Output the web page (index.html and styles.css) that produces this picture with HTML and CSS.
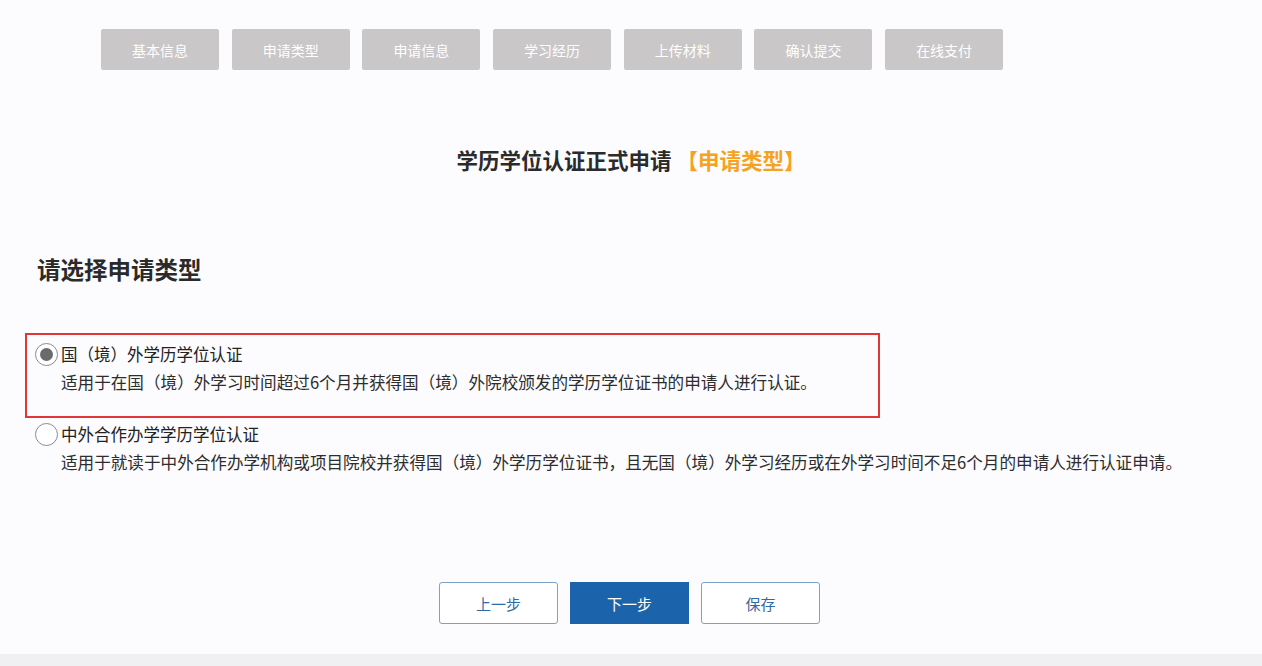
FILE: index.html
```html
<!DOCTYPE html>
<html lang="zh-CN">
<head>
<meta charset="utf-8">
<title>学历学位认证正式申请</title>
<link rel="stylesheet" href="styles.css">
</head>
<body>
<div class="page">
  <nav class="steps">
    <div class="step">基本信息</div>
    <div class="step">申请类型</div>
    <div class="step">申请信息</div>
    <div class="step">学习经历</div>
    <div class="step">上传材料</div>
    <div class="step">确认提交</div>
    <div class="step">在线支付</div>
  </nav>
  <h1 class="title">学历学位认证正式申请 <span class="title-tag">【申请类型】</span></h1>
  <h2 class="section-head">请选择申请类型</h2>
  <div class="options">
    <div class="option option-selected">
      <div class="option-label"><span class="radio radio-on"></span>国（境）外学历学位认证</div>
      <div class="option-desc">适用于在国（境）外学习时间超过6个月并获得国（境）外院校颁发的学历学位证书的申请人进行认证。</div>
    </div>
    <div class="option option-plain">
      <div class="option-label"><span class="radio"></span>中外合作办学学历学位认证</div>
      <div class="option-desc">适用于就读于中外合作办学机构或项目院校并获得国（境）外学历学位证书，且无国（境）外学习经历或在外学习时间不足6个月的申请人进行认证申请。</div>
    </div>
  </div>
  <div class="actions">
    <button class="btn btn-outline">上一步</button>
    <button class="btn btn-primary">下一步</button>
    <button class="btn btn-outline">保存</button>
  </div>
</div>
<div class="footer-bar"></div>
</body>
</html>
```
FILE: styles.css
```css
* { box-sizing: border-box; }
html, body { margin: 0; padding: 0; }
body {
  background: #fcfbfd;
  font-family: "Noto Sans CJK SC", "Noto Sans", sans-serif;
  color: #222;
  width: 1262px;
  height: 666px;
  overflow: hidden;
  display: flex;
  flex-direction: column;
}
.page { flex: 1; }
.steps {
  display: flex;
  gap: 12.7px;
  padding: 29px 0 0 101px;
}
.step {
  width: 118px;
  height: 41px;
  background: #c9c7c8;
  border-radius: 2px;
  color: #fff;
  font-size: 14px;
  display: flex;
  align-items: center;
  justify-content: center;
}
.title {
  margin: 76px 0 0;
  text-align: center;
  font-size: 21.5px;
  line-height: 28px;
  font-weight: 700;
  color: #2b2b2b;
}
.title-tag { color: #f5a21d; }
.section-head {
  margin: 80px 0 0 37px;
  font-size: 23.5px;
  line-height: 30px;
  font-weight: 700;
  color: #2a2a2a;
}
.options {
  margin-top: 49px;
  padding-left: 25px;
}
.option-selected {
  width: 855px;
  height: 85px;
  border: 2px solid #e0363a;
  padding: 6px 0 0 8px;
}
.option-plain {
  padding: 3px 0 0 10px;
}
.option-label {
  display: flex;
  align-items: center;
  font-size: 16.5px;
  line-height: 26px;
  color: #222;
}
.radio {
  width: 23px;
  height: 23px;
  border-radius: 50%;
  border: 1.5px solid #8a8a8a;
  background: #fff;
  margin-right: 3px;
  display: flex;
  align-items: center;
  justify-content: center;
  flex: none;
}
.radio-on::after {
  content: "";
  width: 13px;
  height: 13px;
  border-radius: 50%;
  background: #6a6a6a;
}
.option-desc {
  font-size: 16.6px;
  line-height: 26px;
  margin-top: 2px;
  padding-left: 26px;
  color: #2d2d2d;
}
.actions {
  display: flex;
  gap: 12px;
  padding-left: 439px;
  margin-top: 107px;
}
.btn {
  width: 119px;
  height: 42px;
  font-family: inherit;
  font-size: 15px;
  border-radius: 3px;
  cursor: pointer;
}
.btn-outline {
  background: #fff;
  border: 1.5px solid #7da2c4;
  color: #2f6aa5;
}
.btn-primary {
  background: #1b64ab;
  border: 1.5px solid #1b64ab;
  color: #fff;
  border-radius: 0;
}
.footer-bar {
  height: 12px;
  background: #f0eff2;
  flex: none;
}
```
